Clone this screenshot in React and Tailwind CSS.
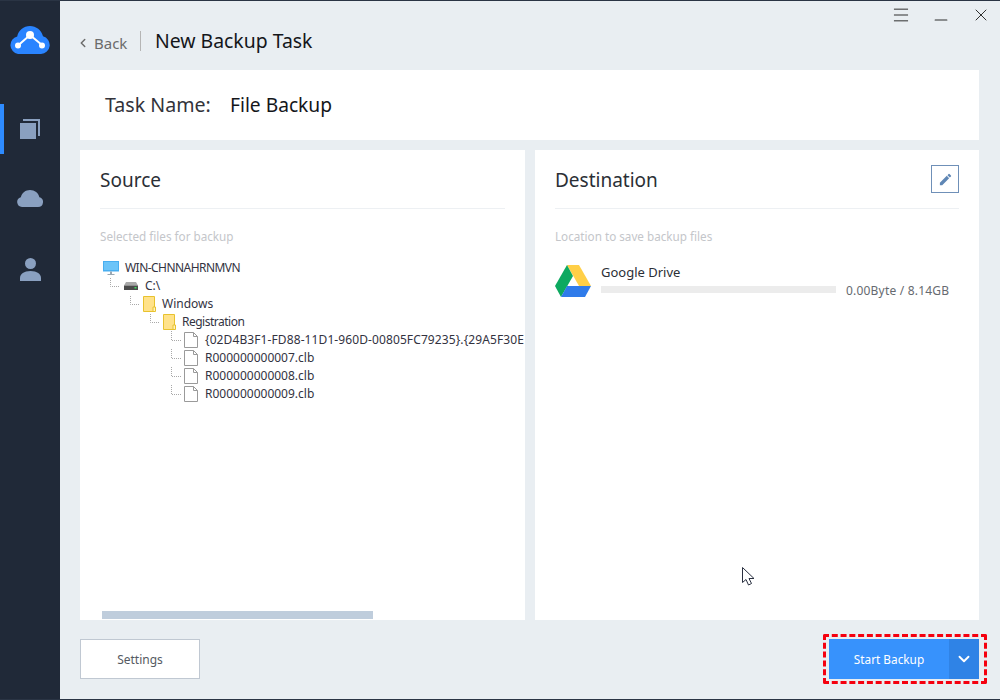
// New Backup Task window: sidebar, task name card, source tree, destination and footer.
import React from 'react';
import { ChevronDown, ChevronLeft, Minus, X, Menu } from 'lucide-react';

function Logo() {
  return (
    <svg viewBox="0 0 40 28" className="w-10 h-7" aria-hidden>
      <path d="M10 28h21a9 9 0 0 0 2-17.7C31.4 4.2 26.2 0 20 0 13.6 0 8.4 4.4 7.2 10.4A9 9 0 0 0 8 28h2z" fill="#2a84ff" />
      <path d="M8 19.5 20 9l12 10" fill="none" stroke="#fff" strokeWidth="2" />
      <circle cx="20" cy="9" r="4" fill="#fff" />
      <circle cx="8" cy="19.5" r="3" fill="#fff" />
      <circle cx="32" cy="19.5" r="3" fill="#fff" />
    </svg>
  );
}

function CopiesIcon() {
  return (
    <svg viewBox="0 0 20 20" className="w-5 h-5" fill="#8aa0c0" aria-hidden>
      <path d="M0 4h16v16H0z" />
      <path d="M3 0h17v17h-2V2H3z" />
    </svg>
  );
}

function CloudIcon() {
  return (
    <svg viewBox="0 0 26 17" className="w-[26px] h-[17px]" fill="#8aa0c0" aria-hidden>
      <path d="M5 17h16a5 5 0 0 0 1.4-9.8C21.5 3 17.7 0 13 0 8.6 0 4.9 2.8 3.8 7.2A5 5 0 0 0 5 17z" />
    </svg>
  );
}

function PersonIcon() {
  return (
    <svg viewBox="0 0 21 23" className="w-[21px] h-[23px]" fill="#8aa0c0" aria-hidden>
      <circle cx="10.5" cy="5.5" r="5.5" />
      <path d="M0 23v-3c0-4 4-7 10.5-7S21 16 21 20v3z" />
    </svg>
  );
}

function Sidebar() {
  return (
    <aside className="w-[60px] shrink-0 bg-[#202938] flex flex-col">
      <div className="h-[103px] pt-[25px] flex justify-center">
        <Logo />
      </div>
      <div className="h-[50px] border-l-4 border-[#2e8bff] flex items-center justify-center pr-1">
        <CopiesIcon />
      </div>
      <div className="h-[72px] pt-[36px] flex justify-center">
        <CloudIcon />
      </div>
      <div className="pt-[32px] flex justify-center">
        <PersonIcon />
      </div>
    </aside>
  );
}

function MonitorIcon() {
  return (
    <svg viewBox="0 0 16 14" className="w-4 h-[14px] shrink-0" aria-hidden>
      <path d="M0 0h16v10.500H0z" fill="#48aef0" />
      <path d="M1 1h14v8H1z" fill="#6cc4f8" />
      <path d="M7 10.500h2V13H7zM4.500 13h7v1h-7z" fill="#9aa7b2" />
    </svg>
  );
}

function DriveIcon() {
  return (
    <svg viewBox="0 0 14 8" className="w-[14px] h-2 shrink-0" aria-hidden>
      <path d="M2 0h10l2 3.500H0z" fill="#a8a8a8" />
      <path d="M0 3.500h14V8H0z" fill="#4b4b4b" />
      <path d="M10.500 5h2v1.500h-2z" fill="#3ddc5c" />
    </svg>
  );
}

function FolderIcon() {
  return (
    <svg viewBox="0 0 13 16" className="w-[13px] h-4 shrink-0" aria-hidden>
      <path d="M.5.500h11v15H.5z" fill="#ffe28a" stroke="#e8c22e" />
      <path d="M10 11h2.500v4.500H10z" fill="#fff3c2" stroke="#e8c22e" />
    </svg>
  );
}

function FileIcon() {
  return (
    <svg viewBox="0 0 14 16" className="w-[14px] h-4 shrink-0" aria-hidden>
      <path d="M.5.500h9l4 4v11H.5z" fill="#fff" stroke="#9a9a9a" />
      <path d="M9.500.500v4h4" fill="none" stroke="#9a9a9a" />
    </svg>
  );
}

// dotted elbow that joins a tree row to its parent
function Elbow({ up = 9 }) {
  return (
    <svg width="10" height="18" className="shrink-0 overflow-visible" aria-hidden>
      <path
        d={`M.5 ${9 - up}V9.500H10`}
        fill="none"
        stroke="#a8a8a8"
        strokeDasharray="1 1"
      />
    </svg>
  );
}

function TreeRow({ indent, up, icon, gap, children }) {
  return (
    <div className={`flex items-center h-[18px] whitespace-nowrap ${indent}`}>
      {up !== undefined && <Elbow up={up} />}
      {icon}
      <span className={`text-[12px] text-[#33333f] ${gap}`}>{children}</span>
    </div>
  );
}

function SourceTree() {
  return (
    <div className="mt-[15px] -mr-5">
      <TreeRow indent="pl-[3px]" icon={<MonitorIcon />} gap="ml-[6px] tracking-[-0.55px]">WIN-CHNNAHRNMVN</TreeRow>
      <TreeRow indent="pl-[10px]" up={8} icon={<span className="ml-1"><DriveIcon /></span>} gap="ml-[7px]">C:\</TreeRow>
      <TreeRow indent="pl-[30px]" up={8} icon={<span className="ml-[3px]"><FolderIcon /></span>} gap="ml-[6px]">Windows</TreeRow>
      <TreeRow indent="pl-[50px]" up={8} icon={<span className="ml-[3px]"><FolderIcon /></span>} gap="ml-[6px] tracking-[-0.5px]">Registration</TreeRow>
      <TreeRow indent="pl-[71px]" up={9} icon={<span className="ml-[3px]"><FileIcon /></span>} gap="ml-[7px] tracking-[0.1px]">
        {'{02D4B3F1-FD88-11D1-960D-00805FC79235}.{29A5F30E'}
      </TreeRow>
      <TreeRow indent="pl-[71px]" up={9} icon={<span className="ml-[3px]"><FileIcon /></span>} gap="ml-[7px]">R000000000007.clb</TreeRow>
      <TreeRow indent="pl-[71px]" up={9} icon={<span className="ml-[3px]"><FileIcon /></span>} gap="ml-[7px]">R000000000008.clb</TreeRow>
      <TreeRow indent="pl-[71px]" up={9} icon={<span className="ml-[3px]"><FileIcon /></span>} gap="ml-[7px]">R000000000009.clb</TreeRow>
    </div>
  );
}

function DriveLogo() {
  return (
    <svg viewBox="0 0 36 32" className="w-9 h-8 shrink-0" aria-hidden>
      <path d="M12 0h12l12 21H24z" fill="#ffcf47" />
      <path d="M12 0 0 21l6 11 12-21z" fill="#0da960" />
      <path d="M12 21h24l-6 11H6z" fill="#2f7bea" />
    </svg>
  );
}

function Panel({ title, action, className = '', children }) {
  return (
    <section className={`bg-white px-5 flex flex-col overflow-hidden ${className}`}>
      <div className="h-[59px] border-b border-[#edf0f3] flex items-center justify-between shrink-0">
        <h2 className="pt-[2px] text-[19px] text-[#2b2f36] font-normal">{title}</h2>
        {action}
      </div>
      {children}
    </section>
  );
}

export default function App() {
  return (
    <div className="w-[1000px] h-[700px] flex border-y border-[#2a3444] bg-[#e9eef2] overflow-hidden font-['Noto_Sans',sans-serif]">
      <Sidebar />
      <main className="flex-1 min-w-0 flex flex-col pl-5 pr-[21px]">
        <header className="h-[69px] flex flex-col shrink-0">
          <div className="h-[28px] flex justify-end items-center gap-[20px] text-[#2f2f2f] -mr-[14px] pr-[2px]">
            <Menu className="w-[20px] h-[20px]" strokeWidth={1.2} />
            <Minus className="w-[20px] h-[20px] translate-y-[5px]" strokeWidth={1.4} />
            <X className="w-[20px] h-[20px]" strokeWidth={1.2} />
          </div>
          <div className="flex items-center h-[24px]">
            <ChevronLeft className="w-[14px] h-[14px] text-[#6b6b6b] -ml-[4px] mt-[4px]" strokeWidth={2.5} />
            <span className="ml-[4px] mt-[4px] text-[15px] text-[#6b6b6b] w-[32px]">Back</span>
            <span className="ml-[14px] w-px h-[20px] bg-[#b5b5b5]" />
            <h1 className="ml-[14px] text-[19.4px] text-[#14161a] font-normal">New Backup Task</h1>
          </div>
        </header>

        <div className="h-[70px] bg-white flex items-center pl-[25px] shrink-0">
          <span className="text-[19.6px] text-[#33333a] w-[125px]">Task Name:</span>
          <span className="text-[19.2px] text-[#14161a]">File Backup</span>
        </div>

        <div className="mt-[10px] h-[470px] flex gap-[10px] shrink-0">
          <Panel title="Source" className="w-[445px]">
            <p className="mt-[19px] text-[11.7px] leading-[16px] text-[#c4c6ca]">Selected files for backup</p>
            <SourceTree />
            <div className="mt-auto mb-px ml-[2px] w-[271px] h-2 bg-[#bfcddc] shrink-0" />
          </Panel>
          <Panel
            title="Destination"
            className="flex-1 relative"
            action={
              <button type="button" className="w-7 h-7 border border-[#6f90b8] flex items-center justify-center text-[#5f87b5]">
                <svg viewBox="0 0 24 24" className="w-[15px] h-[15px]" fill="currentColor" aria-hidden>
                  <path d="M3 17.250V21h3.750L17.810 9.940l-3.750-3.750L3 17.250zM20.710 7.040a1 1 0 0 0 0-1.410l-2.340-2.340a1 1 0 0 0-1.410 0l-1.830 1.830 3.750 3.750 1.830-1.830z" />
                </svg>
              </button>
            }
          >
            <p className="mt-[19px] text-[11.7px] leading-[16px] text-[#c4c6ca]">Location to save backup files</p>
            <div className="mt-[21px] flex">
              <DriveLogo />
              <div className="ml-[10px] flex-1 -mt-[3px]">
                <div className="text-[13px] leading-[20px] text-[#2b2f36]">Google Drive</div>
                <div className="flex items-start mt-[4px]">
                  <div className="w-[235px] h-[7px] bg-[#ececec]" />
                  <span className="ml-[10px] -mt-[2px] text-[12px] tracking-[0.2px] leading-[14px] text-[#666a70]">0.00Byte / 8.14GB</span>
                </div>
              </div>
            </div>
            {/* mouse pointer caught in the screenshot */}
            <svg viewBox="0 0 13 19" className="absolute left-[207px] top-[417px] w-[13px] h-[19px]" aria-hidden>
              <path d="M.5.500v15l3.500-3 2.500 5.500 3-1.500L7 11.500h5z" fill="#fff" stroke="#2a3040" />
            </svg>
          </Panel>
        </div>

        <footer className="flex-1 flex items-start justify-between pt-[19px]">
          <button type="button" className="w-[120px] h-10 pt-px bg-white border border-[#c0c8d2] text-[12px] text-[#555a62]">
            Settings
          </button>
          <div className="relative flex h-10 w-[150px] text-white">
            <button type="button" className="flex-1 pt-px bg-[#3792fc] text-[11.8px]">Start Backup</button>
            <button type="button" className="w-[30px] bg-[#2f83e6] flex items-center justify-center">
              <ChevronDown className="w-[18px] h-[18px]" strokeWidth={2.5} />
            </button>
            {/* red highlight drawn over the button */}
            <span className="absolute -left-[6px] -top-[5px] -right-[8px] -bottom-[5px] border-[3px] border-dashed border-[#f5000f] rounded-[2px]" />
          </div>
        </footer>
      </main>
    </div>
  );
}
